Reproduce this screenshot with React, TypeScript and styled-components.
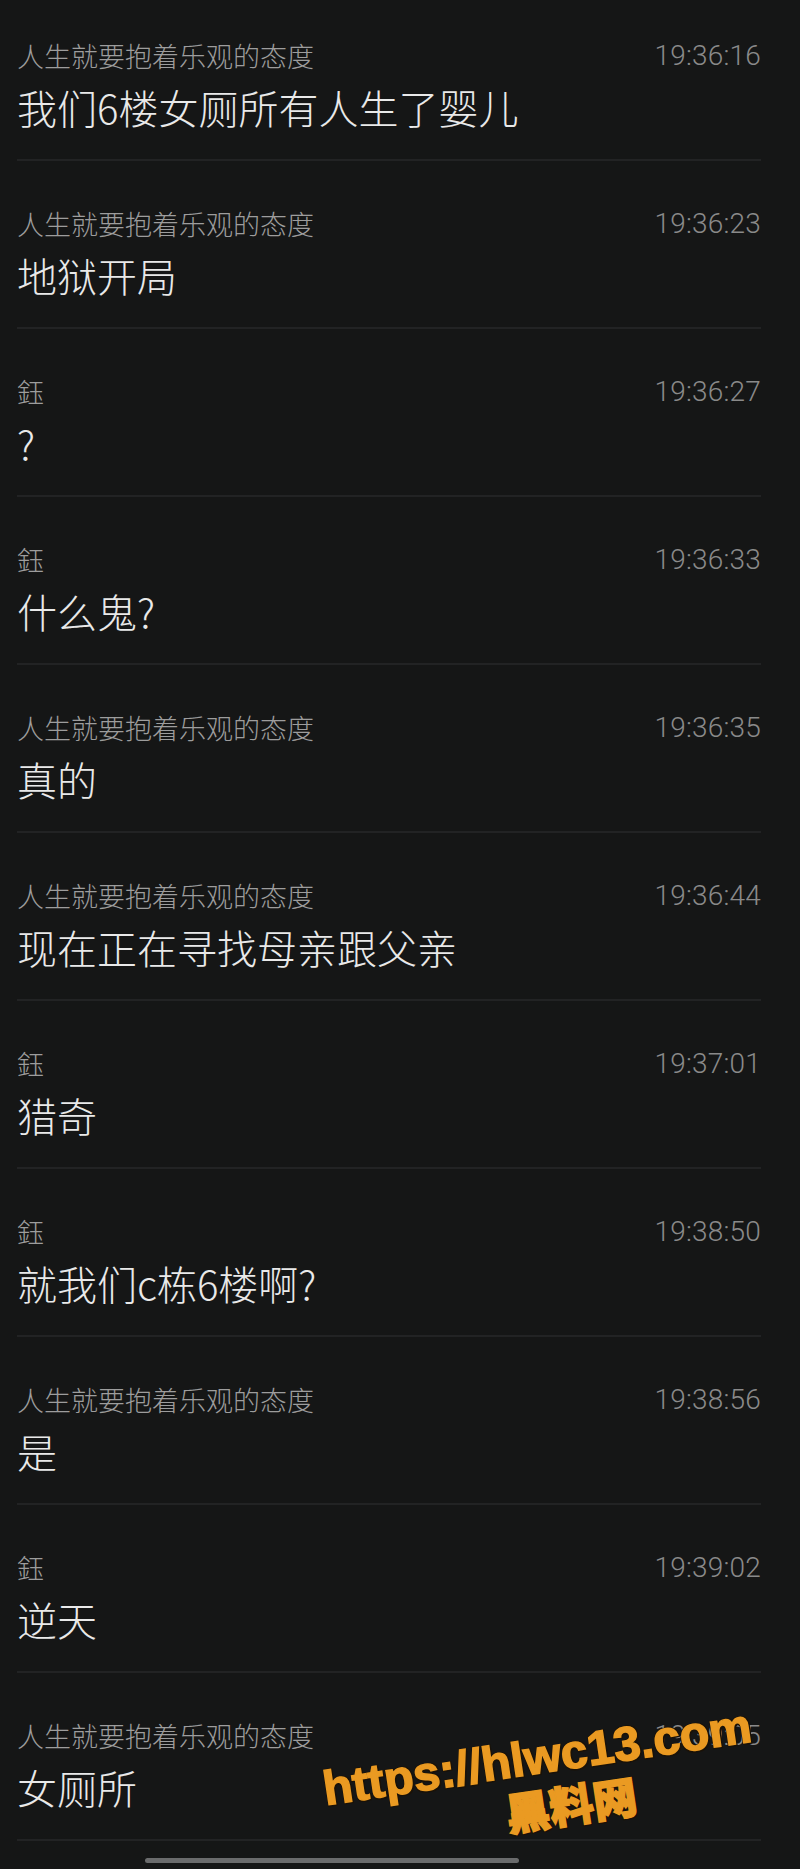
import React from 'react';
import { createGlobalStyle, styled } from 'styled-components';

const GlobalStyle = createGlobalStyle`
  html, body {
    margin: 0;
    padding: 0;
    background: #151616;
  }
`;

type Message = {
  name: string;
  time: string;
  text: string;
};

const OPTIMIST = '人生就要抱着乐观的态度';
const YU = '鈺';

const messages: Message[] = [
  { name: OPTIMIST, time: '19:36:16', text: '我们6楼女厕所有人生了婴儿' },
  { name: OPTIMIST, time: '19:36:23', text: '地狱开局' },
  { name: YU, time: '19:36:27', text: '?' },
  { name: YU, time: '19:36:33', text: '什么鬼?' },
  { name: OPTIMIST, time: '19:36:35', text: '真的' },
  { name: OPTIMIST, time: '19:36:44', text: '现在正在寻找母亲跟父亲' },
  { name: YU, time: '19:37:01', text: '猎奇' },
  { name: YU, time: '19:38:50', text: '就我们c栋6楼啊?' },
  { name: OPTIMIST, time: '19:38:56', text: '是' },
  { name: YU, time: '19:39:02', text: '逆天' },
  { name: OPTIMIST, time: '19:39:05', text: '女厕所' },
];

const App = () => {
  return (
    <Page>
      <GlobalStyle />
      <List>
        {messages.map((m, i) => (
          <Row key={i} $first={i === 0}>
            <Head>
              <Name>{m.name}</Name>
              <Time>{m.time}</Time>
            </Head>
            <Text>{m.text}</Text>
          </Row>
        ))}
      </List>
      <HomeBar />
      <WatermarkUrl>https://hlwc13.com</WatermarkUrl>
      <WatermarkName>黑料网</WatermarkName>
    </Page>
  );
};

const Page = styled.div`
  position: relative;
  width: 800px;
  height: 1869px;
  overflow: hidden;
  background: #151616;
  font-family: 'Noto Sans CJK SC', 'Noto Sans', sans-serif;
`;

const List = styled.div`
  display: flex;
  flex-direction: column;
  padding: 0 39px 0 17px;
`;

const Row = styled.div<{ $first?: boolean }>`
  display: flex;
  flex-direction: column;
  padding-top: ${({ $first }) => ($first ? '39px' : '46px')};
  padding-bottom: 27px;
  border-bottom: 2px solid #222324;
`;

const Head = styled.div`
  display: flex;
  align-items: center;
  justify-content: space-between;
  height: 34px;
  margin-bottom: 9px;
`;

const Name = styled.span`
  font-size: 27px;
  font-weight: 300;
  line-height: 34px;
  color: #9d9d9d;
`;

const Time = styled.span`
  font-family: Roboto, 'Liberation Sans', sans-serif;
  font-weight: 300;
  font-size: 28px;
  line-height: 34px;
  letter-spacing: 0.2px;
  color: #8a8a8a;
`;

const Text = styled.div`
  font-size: 40px;
  font-weight: 300;
  line-height: 50px;
  color: #e9e9e9;
`;

const HomeBar = styled.div`
  width: 374px;
  height: 5px;
  margin: 17px 0 0 145px;
  border-radius: 3px;
  background: #6a6b6c;
`;

const Watermark = styled.div`
  position: absolute;
  transform: translate(-50%, -50%) rotate(-8.5deg);
  white-space: nowrap;
  font-weight: 700;
  color: #ea9a22;
  -webkit-text-stroke: 1.5px #ea9a22;
  text-shadow: 2px 2px 0 #1a1208, -1px -1px 0 #1a1208, 2px -1px 0 #1a1208, -1px 2px 0 #1a1208;
`;

const WatermarkUrl = styled(Watermark)`
  left: 537px;
  top: 1757px;
  font-family: 'Liberation Sans', 'Noto Sans CJK SC', sans-serif;
  font-size: 48px;
`;

const WatermarkName = styled(Watermark)`
  left: 571px;
  top: 1803px;
  font-family: 'Noto Sans CJK SC', sans-serif;
  font-weight: 900;
  font-size: 44px;
`;

export default App;
